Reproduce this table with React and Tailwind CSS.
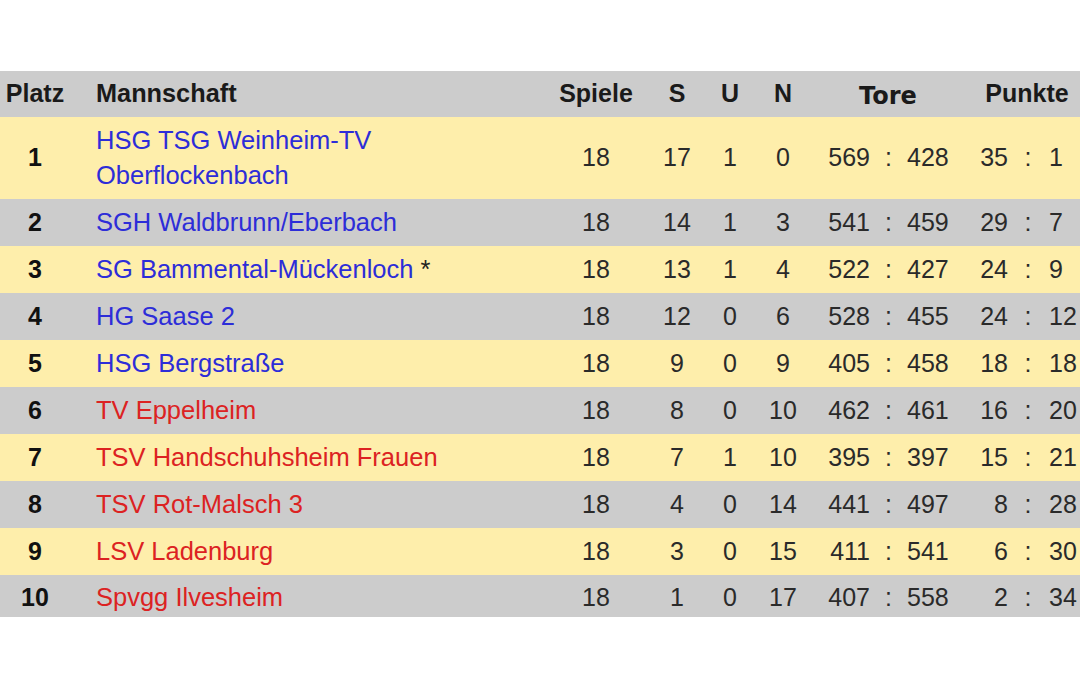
const rows = [
  { p: 1, name: ['HSG TSG Weinheim-TV', 'Oberflockenbach'], c: 'blue', sp: 18, s: 17, u: 1, n: 0, tf: 569, ta: 428, pp: 35, pm: 1 },
  { p: 2, name: ['SGH Waldbrunn/Eberbach'], c: 'blue', sp: 18, s: 14, u: 1, n: 3, tf: 541, ta: 459, pp: 29, pm: 7 },
  { p: 3, name: ['SG Bammental-Mückenloch'], star: true, c: 'blue', sp: 18, s: 13, u: 1, n: 4, tf: 522, ta: 427, pp: 24, pm: 9 },
  { p: 4, name: ['HG Saase 2'], c: 'blue', sp: 18, s: 12, u: 0, n: 6, tf: 528, ta: 455, pp: 24, pm: 12 },
  { p: 5, name: ['HSG Bergstraße'], c: 'blue', sp: 18, s: 9, u: 0, n: 9, tf: 405, ta: 458, pp: 18, pm: 18 },
  { p: 6, name: ['TV Eppelheim'], c: 'red', sp: 18, s: 8, u: 0, n: 10, tf: 462, ta: 461, pp: 16, pm: 20 },
  { p: 7, name: ['TSV Handschuhsheim Frauen'], c: 'red', sp: 18, s: 7, u: 1, n: 10, tf: 395, ta: 397, pp: 15, pm: 21 },
  { p: 8, name: ['TSV Rot-Malsch 3'], c: 'red', sp: 18, s: 4, u: 0, n: 14, tf: 441, ta: 497, pp: 8, pm: 28 },
  { p: 9, name: ['LSV Ladenburg'], c: 'red', sp: 18, s: 3, u: 0, n: 15, tf: 411, ta: 541, pp: 6, pm: 30 },
  { p: 10, name: ['Spvgg Ilvesheim'], c: 'red', sp: 18, s: 1, u: 0, n: 17, tf: 407, ta: 558, pp: 2, pm: 34 },
]

const grid =
  'grid grid-cols-[70px_472px_108px_54px_52px_54px_60px_37px_53px_48px_40px_32px] items-center'

export default function App() {
  return (
    <div
      className="w-[1080px] h-[675px] bg-white pt-[71px] text-[25px] text-[#2a2a2a]"
      style={{ fontFamily: '"Liberation Sans", Arial, sans-serif' }}
    >
      <div className={`${grid} h-[46px] bg-[#cccccc] font-bold text-[#1a1a1a]`}>
        <div className="text-center">Platz</div>
        <div className="pl-[26px] text-[25.3px]">Mannschaft</div>
        <div className="text-center">Spiele</div>
        <div className="text-center">S</div>
        <div className="text-center">U</div>
        <div className="text-center">N</div>
        <div
          className="col-span-3 text-center text-[24px] pl-[6px] pt-[3px]"
          style={{ fontFamily: '"DejaVu Sans", Verdana, sans-serif' }}
        >
          Tore
        </div>
        <div className="col-span-3 text-center pl-[14px]">Punkte</div>
      </div>

      {rows.map((r, i) => (
        <div
          key={r.p}
          className={`${grid} ${i % 2 === 0 ? 'bg-[#feeeab]' : 'bg-[#cccccc]'} ${i === 9 ? 'h-[42px] pt-[3px]' : ''}`}
        >
          <div className="text-center font-bold text-[#111]">{r.p}</div>
          <div
            className={`pl-[26px] text-[25.5px] leading-[35px] ${i === 9 ? '' : 'py-[6px]'} ${
              r.c === 'blue' ? 'text-[#2d2dd8]' : 'text-[#dc2222]'
            }`}
          >
            {r.name.map((line) => (
              <div key={line}>
                {line}
                {r.star && <span className="text-[#222]"> *</span>}
              </div>
            ))}
          </div>
          <div className="text-center">{r.sp}</div>
          <div className="text-center">{r.s}</div>
          <div className="text-center">{r.u}</div>
          <div className="text-center">{r.n}</div>
          <div className="text-right">{r.tf}</div>
          <div className="text-center">:</div>
          <div className="text-left">{r.ta}</div>
          <div className="text-right">{r.pp}</div>
          <div className="text-center">:</div>
          <div className="text-left pl-[1px]">{r.pm}</div>
        </div>
      ))}
    </div>
  )
}
